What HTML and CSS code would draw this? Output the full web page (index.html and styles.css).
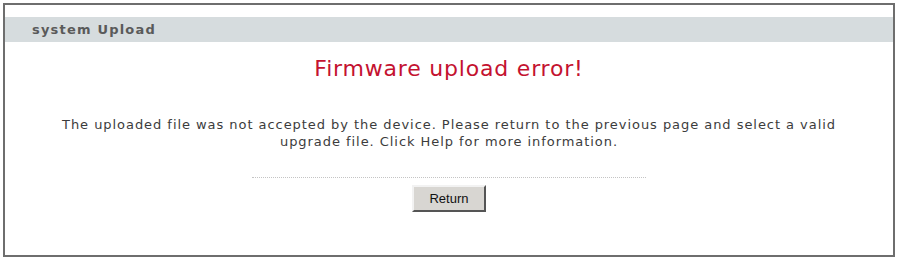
FILE: index.html
```html
<!DOCTYPE html>
<html lang="en">
<head>
    <meta charset="UTF-8">
    <title>system Upload</title>
    <link rel="stylesheet" href="styles.css">
</head>
<body>
    <div class="panel">
        <!-- Barra de título -->
        <div class="panel-header">system Upload</div>

        <div class="panel-body">
            <h1 class="error-title">Firmware upload error!</h1>
            <p class="error-text">
                The uploaded file was not accepted by the device. Please return to the previous page and select a valid<br>
                upgrade file. Click Help for more information.
            </p>
            <div class="separator"></div>
            <button class="return-btn">Return</button>
        </div>
    </div>
</body>
</html>
```

FILE: styles.css
```css
* {
    margin: 0;
    padding: 0;
    box-sizing: border-box;
}

body {
    background: #ffffff;
    padding: 3px 3px 0 3px;
    font-family: 'DejaVu Sans', Verdana, sans-serif;
}

.panel {
    width: 892px;
    height: 254px;
    border: 2px solid #6e6e6e;
    padding-top: 12px;
}

.panel-header {
    height: 25px;
    line-height: 25px;
    background: #d6dcde;
    color: #5a5a5a;
    font-size: 13px;
    font-weight: bold;
    letter-spacing: 1.2px;
    padding-left: 27px;
}

.panel-body {
    display: flex;
    flex-direction: column;
    align-items: center;
}

.error-title {
    margin-top: 12px;
    font-size: 22px;
    font-weight: normal;
    color: #c41230;
    letter-spacing: 0.8px;
    line-height: 30px;
}

.error-text {
    margin-top: 32px;
    text-align: center;
    color: #3c3c3c;
    font-size: 13px;
    letter-spacing: 0.95px;
    line-height: 17px;
}

.separator {
    margin-top: 27px;
    width: 394px;
    border-top: 1px dotted #c4c4c4;
}

.return-btn {
    margin-top: 7px;
    width: 74px;
    height: 27px;
    background: #d8d6d2;
    border: 2px solid;
    border-color: #f2f2f2 #555555 #555555 #f2f2f2;
    font-family: 'Liberation Sans', Arial, sans-serif;
    font-size: 13px;
    color: #111111;
}
```
